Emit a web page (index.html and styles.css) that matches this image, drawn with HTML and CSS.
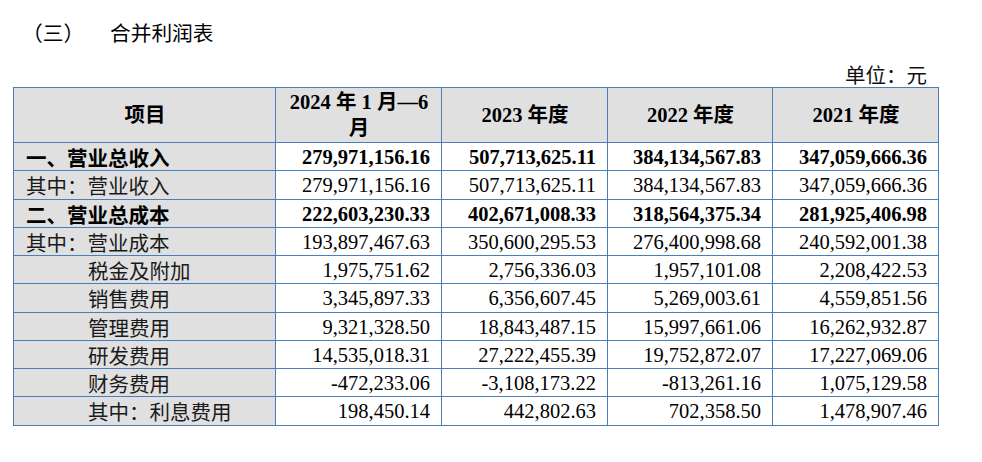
FILE: index.html
```html
<!DOCTYPE html>
<html lang="zh-CN">
<head>
<meta charset="utf-8">
<title>合并利润表</title>
<link rel="stylesheet" href="styles.css">
</head>
<body>
<div class="page">
  <div class="title"><span class="num">（三）</span><span class="name">合并利润表</span></div>
  <div class="unit">单位：元</div>
  <table class="report">
    <colgroup>
      <col class="c-item"><col class="c-v"><col class="c-v"><col class="c-v3"><col class="c-v">
    </colgroup>
    <thead>
      <tr>
        <th>项目</th>
        <th>2024 年 1 月—6<br>月</th>
        <th>2023 年度</th>
        <th>2022 年度</th>
        <th>2021 年度</th>
      </tr>
    </thead>
    <tbody>
      <tr class="bold r28">
        <td class="lbl">一、营业总收入</td>
        <td>279,971,156.16</td><td>507,713,625.11</td><td>384,134,567.83</td><td>347,059,666.36</td>
      </tr>
      <tr class="r29">
        <td class="lbl">其中：营业收入</td>
        <td>279,971,156.16</td><td>507,713,625.11</td><td>384,134,567.83</td><td>347,059,666.36</td>
      </tr>
      <tr class="bold r28">
        <td class="lbl">二、营业总成本</td>
        <td>222,603,230.33</td><td>402,671,008.33</td><td>318,564,375.34</td><td>281,925,406.98</td>
      </tr>
      <tr class="r28">
        <td class="lbl">其中：营业成本</td>
        <td>193,897,467.63</td><td>350,600,295.53</td><td>276,400,998.68</td><td>240,592,001.38</td>
      </tr>
      <tr class="r28">
        <td class="lbl ind">税金及附加</td>
        <td>1,975,751.62</td><td>2,756,336.03</td><td>1,957,101.08</td><td>2,208,422.53</td>
      </tr>
      <tr class="r29">
        <td class="lbl ind">销售费用</td>
        <td>3,345,897.33</td><td>6,356,607.45</td><td>5,269,003.61</td><td>4,559,851.56</td>
      </tr>
      <tr class="r28">
        <td class="lbl ind">管理费用</td>
        <td>9,321,328.50</td><td>18,843,487.15</td><td>15,997,661.06</td><td>16,262,932.87</td>
      </tr>
      <tr class="r28">
        <td class="lbl ind">研发费用</td>
        <td>14,535,018.31</td><td>27,222,455.39</td><td>19,752,872.07</td><td>17,227,069.06</td>
      </tr>
      <tr class="r28">
        <td class="lbl ind">财务费用</td>
        <td>-472,233.06</td><td>-3,108,173.22</td><td>-813,261.16</td><td>1,075,129.58</td>
      </tr>
      <tr class="r29">
        <td class="lbl ind">其中：利息费用</td>
        <td>198,450.14</td><td>442,802.63</td><td>702,358.50</td><td>1,478,907.46</td>
      </tr>
    </tbody>
  </table>
</div>
</body>
</html>
```

FILE: styles.css
```css
html, body {
  margin: 0;
  padding: 0;
  background: #ffffff;
}

body {
  font-family: "Liberation Serif", "Noto Sans CJK SC", serif;
  font-size: 20.5px;
  color: #000000;
}

.page {
  padding: 18px 0 0 13px;
  width: 925px;
}

.title {
  line-height: 28px;
  height: 28px;
  padding-left: 9px;
  display: flex;
  align-items: center;
  font-family: "Noto Sans CJK SC", sans-serif;
  font-size: 20.7px;
}

.title .num {
  width: 88px;
}

.unit {
  margin-top: 16px;
  line-height: 25px;
  height: 25px;
  text-align: right;
  padding-right: 11px;
  font-family: "Noto Sans CJK SC", sans-serif;
  color: #111;
}

.report {
  border-collapse: collapse;
  table-layout: fixed;
  width: 925px;
  border: 1.5px solid #4a7ebb;
}

.report .c-item { width: 262px; }
.report .c-v { width: 166px; }
.report .c-v3 { width: 165px; }

.report th,
.report td {
  border: 1px solid #4a7ebb;
  padding: 0 11px 0 12px;
  white-space: nowrap;
}

.report th {
  background: #e0e0e0;
  height: 54px;
  font-weight: bold;
  text-align: center;
  line-height: 26px;
  vertical-align: middle;
}

.report td {
  text-align: right;
  line-height: 24px;
  vertical-align: middle;
}

.report td.lbl {
  background: #e0e0e0;
  text-align: left;
  padding-left: 12px;
  font-family: "Noto Sans CJK SC", sans-serif;
  color: #1a1a1a;
}

.report td.ind {
  padding-left: 74px;
}

.report tr.bold td {
  font-weight: bold;
}

.report tr.bold td.lbl {
  color: #000;
}

.report tr.r28 td { height: 27px; }
.report tr.r29 td { height: 28px; }
```
